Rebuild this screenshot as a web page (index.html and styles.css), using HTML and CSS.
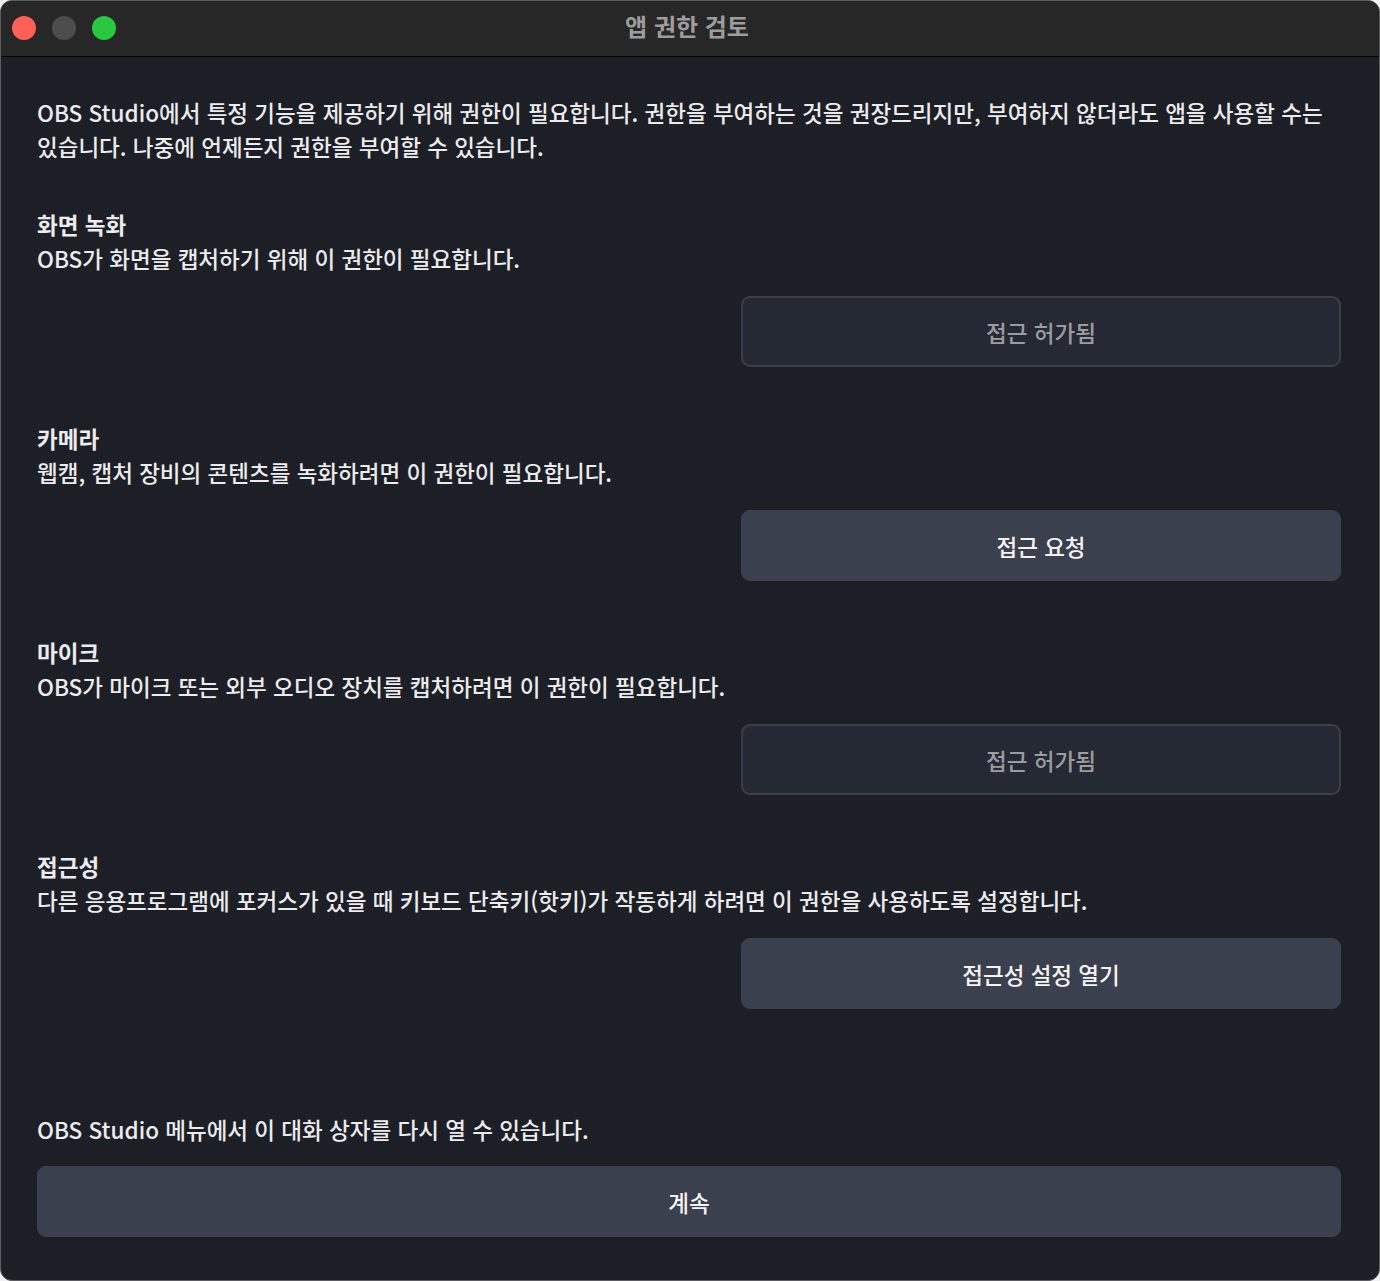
FILE: index.html
```html
<!DOCTYPE html>
<html lang="ko">
<head>
<meta charset="utf-8">
<title>앱 권한 검토</title>
<link rel="stylesheet" href="styles.css">
</head>
<body>
<div class="window">
  <div class="titlebar">
    <div class="lights">
      <span class="light red"></span>
      <span class="light gray"></span>
      <span class="light green"></span>
    </div>
    <div class="title">앱 권한 검토</div>
  </div>
  <div class="content">
    <p class="intro">OBS Studio에서 특정 기능을 제공하기 위해 권한이 필요합니다. 권한을 부여하는 것을 권장드리지만, 부여하지 않더라도 앱을 사용할 수는 있습니다. 나중에 언제든지 권한을 부여할 수 있습니다.</p>

    <section class="perm">
      <div class="perm-title">화면 녹화</div>
      <div class="perm-desc">OBS가 화면을 캡처하기 위해 이 권한이 필요합니다.</div>
      <div class="btn-row"><button class="btn disabled">접근 허가됨</button></div>
    </section>

    <section class="perm">
      <div class="perm-title">카메라</div>
      <div class="perm-desc">웹캠, 캡처 장비의 콘텐츠를 녹화하려면 이 권한이 필요합니다.</div>
      <div class="btn-row"><button class="btn">접근 요청</button></div>
    </section>

    <section class="perm">
      <div class="perm-title">마이크</div>
      <div class="perm-desc">OBS가 마이크 또는 외부 오디오 장치를 캡처하려면 이 권한이 필요합니다.</div>
      <div class="btn-row"><button class="btn disabled">접근 허가됨</button></div>
    </section>

    <section class="perm">
      <div class="perm-title">접근성</div>
      <div class="perm-desc">다른 응용프로그램에 포커스가 있을 때 키보드 단축키(핫키)가 작동하게 하려면 이 권한을 사용하도록 설정합니다.</div>
      <div class="btn-row"><button class="btn">접근성 설정 열기</button></div>
    </section>

    <div class="footer">
      <div class="footer-text">OBS Studio 메뉴에서 이 대화 상자를 다시 열 수 있습니다.</div>
      <button class="btn wide">계속</button>
    </div>
  </div>
</div>
</body>
</html>
```
FILE: styles.css
```css
* { box-sizing: border-box; }
html, body { margin: 0; padding: 0; background: #f2f2f2; }
body {
  font-family: "Noto Sans CJK KR", "Noto Sans", sans-serif;
  color: #ececee;
}
.window {
  width: 1380px;
  height: 1281px;
  border: 1px solid #5c5c5c;
  border-radius: 12px;
  overflow: hidden;
  background: #1d1f27;
  display: flex;
  flex-direction: column;
}
.titlebar {
  height: 56px;
  flex: none;
  background: #272727;
  border-bottom: 1px solid #050505;
  position: relative;
  display: flex;
  align-items: center;
  justify-content: center;
}
.lights {
  position: absolute;
  left: 11px;
  top: 15px;
  display: flex;
  gap: 16px;
}
.light {
  width: 24px;
  height: 24px;
  border-radius: 50%;
  display: block;
}
.light.red { background: #fe5f57; }
.light.gray { background: #4d4d4d; }
.light.green { background: #28c840; }
.title {
  font-size: 24px;
  font-weight: 700;
  color: #9d9d9d;
  margin-top: -6px;
  margin-left: -6px;
}
.content {
  flex: 1;
  padding: 38px 38px 0 36px;
  display: flex;
  flex-direction: column;
  font-size: 22.5px;
  font-weight: 500;
  line-height: 34px;
  word-break: keep-all;
}
.intro { margin: 0 0 44px; }
.perm { margin-bottom: 54px; }
.perm-title { font-weight: 700; }
.btn-row {
  display: flex;
  justify-content: flex-end;
  margin-top: 21px;
}
.btn {
  font-family: inherit;
  font-size: 22.5px;
  font-weight: 500;
  width: 600px;
  height: 71px;
  border-radius: 9px;
  border: 1px solid #3c404c;
  background: #3b404e;
  color: #f4f4f6;
  display: flex;
  align-items: center;
  justify-content: center;
  padding: 0;
}
.btn.disabled {
  background: #252934;
  border: 2px solid #3a3e4b;
  color: #9c9ca0;
}
.footer { margin-top: 49px; }
.footer-text { margin-bottom: 20px; }
.btn.wide { width: 100%; }
```
